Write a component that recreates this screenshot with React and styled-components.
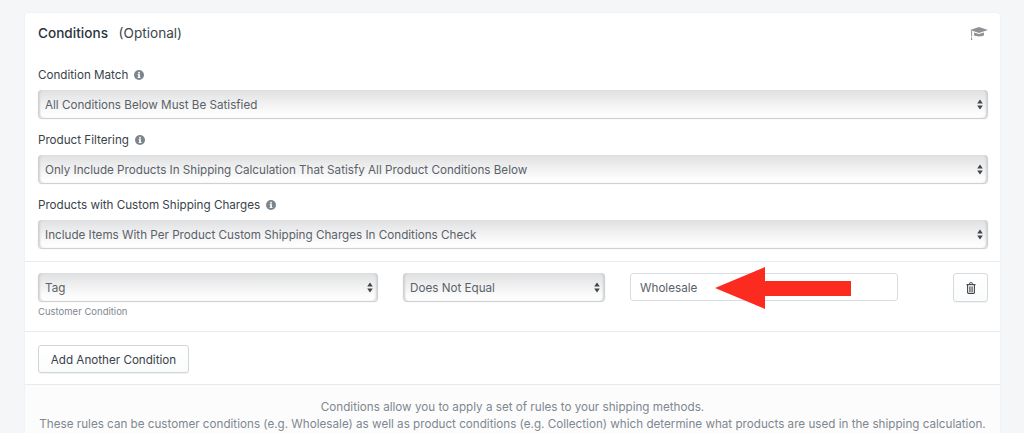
import React from "react";
import styled, { createGlobalStyle } from "styled-components";

const GlobalStyle = createGlobalStyle`
  html, body {
    margin: 0;
    padding: 0;
    height: 100%;
    overflow: hidden;
    background: #f4f6f8;
    font-family: Inter, "Liberation Sans", sans-serif;
    -webkit-font-smoothing: antialiased;
  }
  * {
    box-sizing: border-box;
  }
`;

const Page = styled.div`
  height: 433px;
  overflow: hidden;
  padding: 13px 24px 0 25px;
`;

const Card = styled.div`
  background: #fff;
  border-radius: 3px 3px 0 0;
  box-shadow: 0 0 2px rgba(63, 63, 68, 0.08);
`;

const Header = styled.div`
  height: 40px;
  padding: 12px 12px 0 13px;
  display: flex;
  justify-content: space-between;
  align-items: flex-start;
`;

const Title = styled.h2`
  margin: 0;
  font-size: 13.6px;
  line-height: 17px;
  font-weight: 500;
  color: #2b343e;
`;

const Optional = styled.span`
  margin-left: 7px;
  font-weight: 400;
  color: #3c444d;
`;

const CapIcon = styled.svg`
  margin-top: 2px;
`;

const Section = styled.div`
  padding: 14px 12px 13px 13px;
  display: flex;
  flex-direction: column;
  gap: 14px;
`;

const Field = styled.div`
  display: flex;
  flex-direction: column;
  gap: 7px;
`;

const Label = styled.div`
  display: flex;
  align-items: center;
  gap: 6px;
  height: 16px;
  font-size: 11.65px;
  line-height: 16px;
  color: #3a434b;
`;

const SelectBox = styled.div`
  height: 28px;
  width: ${(props) => props.$width || "100%"};
  padding: 2px 5px 0 7px;
  display: flex;
  align-items: center;
  justify-content: space-between;
  font-size: 11.67px;
  color: #5a6269;
  border-radius: 4px;
  background: linear-gradient(#dfe0e1, #f0f0f1 45%, #fdfdfd 85%);
  box-shadow: inset 3px 0 2px -1px #cfd0d2, inset -3px 0 2px -1px #cfd0d2,
    0 1px 1px #cacccf;
`;

const CaretIcon = styled.svg`
  margin-top: -2px;
`;

const ConditionRow = styled.div`
  border-top: 1px solid #e8ebee;
  border-bottom: 1px solid #e8ebee;
  height: 71px;
  padding: 11px 12px 0 13px;
  display: flex;
  align-items: flex-start;
`;

const Column = styled.div`
  display: flex;
  flex-direction: column;
  gap: 5px;
  margin-right: 25px;
`;

const Caption = styled.div`
  font-size: 9.5px;
  line-height: 11px;
  color: #80888f;
`;

const InputWrap = styled.div`
  position: relative;
  width: 268px;
  height: 28px;
  margin-right: 55px;
`;

const TextInput = styled.div`
  height: 100%;
  padding: 1px 9px 0;
  display: flex;
  align-items: center;
  font-size: 11.67px;
  color: #5a6269;
  background: #fff;
  border: 1px solid #d8dde2;
  border-radius: 3px;
`;

const Arrow = styled.svg`
  position: absolute;
  left: 85px;
  top: -6px;
`;

const IconButton = styled.button`
  width: 35px;
  height: 29px;
  padding: 0;
  display: flex;
  align-items: center;
  justify-content: center;
  background: linear-gradient(#fff, #fafbfb);
  border: 1px solid #d5dade;
  border-radius: 3px;
  box-shadow: 0 1px 0 rgba(22, 29, 37, 0.05);
`;

const ButtonRow = styled.div`
  height: 53px;
  padding: 13px 13px 0 13px;
  border-bottom: 1px solid #e8ebee;
`;

const Button = styled.button`
  height: 28px;
  width: 151px;
  padding: 1px 0 0;
  font-family: inherit;
  font-size: 11.65px;
  color: #3a434c;
  background: linear-gradient(#fff, #fafbfb);
  border: 1px solid #d0d5da;
  border-radius: 3px;
  box-shadow: 0 1px 0 rgba(22, 29, 37, 0.05);
`;

const Footer = styled.div`
  background: #fcfcfd;
  padding: 14px 0 0;
  height: 60px;
  text-align: center;
  font-size: 11.67px;
  line-height: 17px;
  color: #80888f;
`;

function Caret() {
  return (
    <CaretIcon width="6" height="11" viewBox="0 0 6 11">
      <path d="M3 0.5 L5.8 4.5 H0.2 Z M3 10.5 L0.2 6.5 H5.8 Z" fill="#3f464d" />
    </CaretIcon>
  );
}

function InfoIcon() {
  return (
    <svg width="10" height="10" viewBox="0 0 10 10">
      <circle cx="5" cy="5" r="5" fill="#7d858c" />
      <rect x="4.2" y="4.2" width="1.7" height="3.6" fill="#fff" />
      <rect x="3.6" y="7.1" width="2.9" height="0.9" fill="#fff" />
      <rect x="3.6" y="4.2" width="1.6" height="0.8" fill="#fff" />
      <circle cx="5" cy="2.8" r="0.95" fill="#fff" />
    </svg>
  );
}

function GraduationCap() {
  return (
    <CapIcon width="18" height="13" viewBox="0 0 18 13">
      <path d="M9 0 L18 2.9 L9 5.9 L0 2.9 Z" fill="#8e9296" />
      <path d="M4 5.4 L9 7 L14 5.4 V8.2 C12.2 9.8 5.8 9.8 4 8.2 Z" fill="#8e9296" />
      <path d="M1.6 3.6 V9" stroke="#8e9296" strokeWidth="1" />
      <path d="M0.9 13 L1.6 8.4 L2.3 13 Z" fill="#8e9296" />
    </CapIcon>
  );
}

function TrashIcon() {
  return (
    <svg width="10" height="12" viewBox="0 0 10 12" fill="none" stroke="#3f464d">
      <path d="M0.5 2.6 H9.5" strokeWidth="1.1" />
      <path d="M3.3 2.4 L3.9 0.7 H6.1 L6.7 2.4" strokeWidth="0.9" />
      <path d="M1.6 2.8 V10.6 C1.6 11.1 1.9 11.4 2.4 11.4 H7.6 C8.1 11.4 8.4 11.1 8.4 10.6 V2.8" strokeWidth="1.1" />
      <path d="M3.7 4.4 V10 M5 4.4 V10 M6.3 4.4 V10" strokeWidth="0.8" />
    </svg>
  );
}

function Select({ value, width }) {
  return (
    <SelectBox $width={width}>
      {value}
      <Caret />
    </SelectBox>
  );
}

const fields = [
  { label: "Condition Match", value: "All Conditions Below Must Be Satisfied" },
  {
    label: "Product Filtering",
    value: "Only Include Products In Shipping Calculation That Satisfy All Product Conditions Below",
  },
  {
    label: "Products with Custom Shipping Charges",
    value: "Include Items With Per Product Custom Shipping Charges In Conditions Check",
  },
];

export default function App() {
  return (
    <Page>
      <GlobalStyle />
      <Card>
        <Header>
          <Title>
            Conditions <Optional>(Optional)</Optional>
          </Title>
          <GraduationCap />
        </Header>
        <Section>
          {fields.map((field) => (
            <Field key={field.label}>
              <Label>
                {field.label}
                <InfoIcon />
              </Label>
              <Select value={field.value} />
            </Field>
          ))}
        </Section>
        <ConditionRow>
          <Column>
            <Select value="Tag" width="340px" />
            <Caption>Customer Condition</Caption>
          </Column>
          <Column>
            <Select value="Does Not Equal" width="202px" />
          </Column>
          <InputWrap>
            <TextInput>Wholesale</TextInput>
            <Arrow width="136" height="42" viewBox="0 0 136 42">
              <path d="M0 21 L50 0 V14 H136 V29 H50 V42 Z" fill="#fb2c1f" />
            </Arrow>
          </InputWrap>
          <IconButton aria-label="Delete">
            <TrashIcon />
          </IconButton>
        </ConditionRow>
        <ButtonRow>
          <Button>Add Another Condition</Button>
        </ButtonRow>
        <Footer>
          Conditions allow you to apply a set of rules to your shipping methods.
          <br />
          These rules can be customer conditions (e.g. Wholesale) as well as product conditions (e.g. Collection) which determine what products are used in the shipping calculation.
        </Footer>
      </Card>
    </Page>
  );
}
